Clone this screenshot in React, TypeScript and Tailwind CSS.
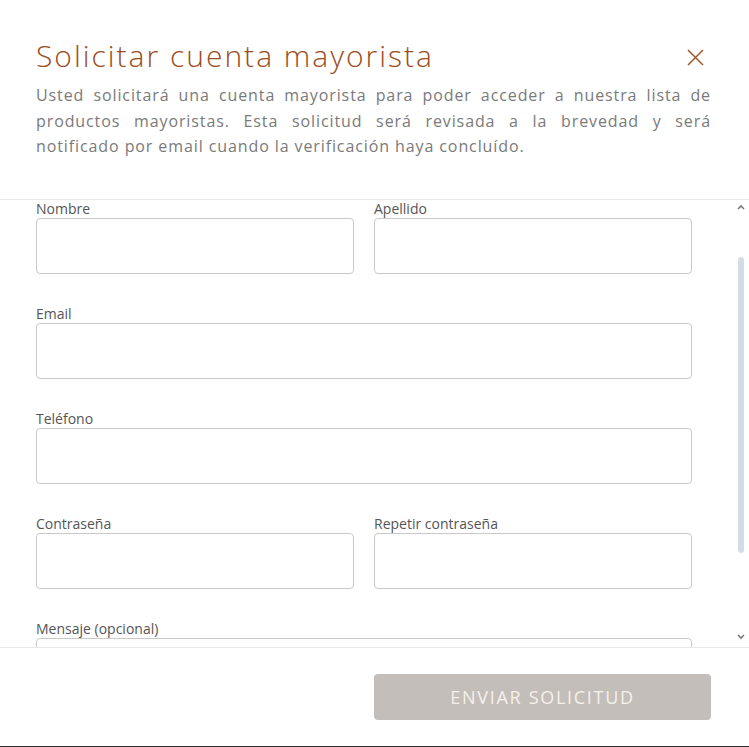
import { useState } from "react";

const Field = ({ label, type = "text" }: { label: string; type?: string }) => {
    const [value, setValue] = useState("");
    return (
        <div className="flex flex-col">
            <label className="text-[14px] leading-[18px] text-[#555555]">{label}</label>
            <input
                type={type}
                value={value}
                onChange={(e) => setValue(e.target.value)}
                className="h-[56px] w-full rounded border border-[#c9c9c9] bg-white px-3 text-[15px] text-[#444] outline-none"
            />
        </div>
    );
};

const Chevron = ({ up }: { up?: boolean }) => (
    <svg className="h-[6px] w-[8px]" viewBox="0 0 8 6" fill="none" stroke="#7a7a7a" strokeWidth="1.6">
        {up ? <path d="M1 5l3-3 3 3" /> : <path d="M1 1l3 3 3-3" />}
    </svg>
);

export default function App() {
    const [msg, setMsg] = useState("");

    return (
        <div className="min-h-screen bg-[#2e2e2e]" style={{ fontFamily: '"Open Sans", "Noto Sans", sans-serif' }}>
            <div className="flex h-[746px] w-full flex-col bg-white">
                {/* header */}
                <div className="h-[200px] border-b border-[#e8e8e8] pl-9 pr-[38px] pt-[37px]">
                    <div className="flex items-start justify-between">
                        <h2 className="text-[30px] font-light leading-[38px] tracking-[2px] text-[#9a4c22]">Solicitar cuenta mayorista</h2>
                        <button type="button" className="mr-[7px] mt-[12px] text-[#a3562c]">
                            <svg className="h-[17px] w-[17px]" viewBox="0 0 17 17" fill="none" stroke="currentColor" strokeWidth="1.5">
                                <path d="M1 1l15 15M16 1L1 16" />
                            </svg>
                        </button>
                    </div>
                    <p className="mt-[8px] text-justify text-[16px] leading-[25.5px] tracking-[0.9px] text-[#7a7a7a]">
                        Usted solicitará una cuenta mayorista para poder acceder a nuestra lista de productos mayoristas. Esta solicitud será revisada a la brevedad y será notificado por email cuando la verificación haya concluído.
                    </p>
                </div>

                {/* body */}
                <div className="flex min-h-0 flex-1 overflow-hidden">
                    <div className="flex-1 pl-9 pr-[43px]">
                        <div className="flex flex-col gap-[31px]">
                            <div className="grid grid-cols-2 gap-x-5">
                                <Field label="Nombre" />
                                <Field label="Apellido" />
                            </div>
                            <Field label="Email" type="email" />
                            <Field label="Teléfono" type="tel" />
                            <div className="grid grid-cols-2 gap-x-5">
                                <Field label="Contraseña" type="password" />
                                <Field label="Repetir contraseña" type="password" />
                            </div>
                            <div className="flex flex-col">
                                <label className="text-[14px] leading-[18px] text-[#555555]">Mensaje (opcional)</label>
                                <textarea
                                    value={msg}
                                    onChange={(e) => setMsg(e.target.value)}
                                    className="h-[120px] w-full resize-none rounded border border-[#c9c9c9] outline-none"
                                />
                            </div>
                        </div>
                    </div>
                    {/* scrollbar */}
                    <div className="flex w-[14px] flex-col items-center pb-[7px] pr-[2px] pt-[4px]">
                        <Chevron up />
                        <div className="mt-[47px] h-[296px] w-[6px] rounded-full bg-[#d2dde6]" />
                        <div className="flex-1" />
                        <Chevron />
                    </div>
                </div>

                {/* footer */}
                <div className="flex h-[99px] justify-end border-t border-[#e8e8e8] pr-[38px] pt-[26px]">
                    <button
                        type="submit"
                        className="flex h-[46px] w-[337px] items-center justify-center rounded bg-[#c4bebb] text-[18px] uppercase tracking-[1.7px] text-[#f6f0ea]"
                    >
                        Enviar solicitud
                    </button>
                </div>
            </div>
        </div>
    );
}
